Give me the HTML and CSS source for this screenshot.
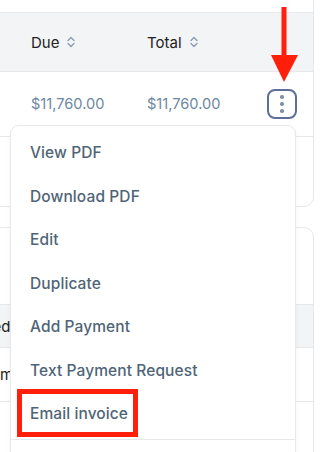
FILE: index.html
```html
<!DOCTYPE html>
<html lang="en">
<head>
    <meta charset="UTF-8">
    <meta name="viewport" content="width=device-width, initial-scale=1.0">
    <title>Invoices</title>
    <link rel="stylesheet" href="styles.css">
</head>
<body>
<div class="page">

    <div class="board">
        <!-- Invoice table -->
        <section class="card card-top">
            <div class="toolbar"></div>
            <div class="grid thead">
                <div class="cell"></div>
                <div class="cell">Due <svg class="sort" viewBox="0 0 8 12" width="8" height="12"><path d="M1 4.5 4 1.5 7 4.5M1 7.5 4 10.5 7 7.5" fill="none" stroke="#8b9cb0" stroke-width="1.4" stroke-linecap="round" stroke-linejoin="round"/></svg></div>
                <div class="cell">Total <svg class="sort" viewBox="0 0 8 12" width="8" height="12"><path d="M1 4.5 4 1.5 7 4.5M1 7.5 4 10.5 7 7.5" fill="none" stroke="#8b9cb0" stroke-width="1.4" stroke-linecap="round" stroke-linejoin="round"/></svg></div>
                <div class="cell"></div>
            </div>
            <div class="grid trow">
                <div class="cell"></div>
                <div class="cell amount">$11,760.00</div>
                <div class="cell amount">$11,760.00</div>
                <div class="cell action">
                    <button class="kebab" aria-label="More actions">
                        <span class="dot"></span><span class="dot"></span><span class="dot"></span>
                    </button>
                </div>
            </div>
            <div class="trow-empty"></div>
        </section>

        <!-- Second table -->
        <section class="card card-bottom">
            <div class="c2-top"></div>
            <div class="grid2 thead2">
                <div class="cell2">Created</div>
            </div>
            <div class="grid2 trow2">
                <div class="cell2 amount">Adam Lee</div>
            </div>
            <div class="trow-empty"></div>
        </section>
    </div>

    <!-- Actions menu -->
    <div class="menu">
        <a class="menu-item" href="#">View PDF</a>
        <a class="menu-item" href="#">Download PDF</a>
        <a class="menu-item" href="#">Edit</a>
        <a class="menu-item" href="#">Duplicate</a>
        <a class="menu-item" href="#">Add Payment</a>
        <a class="menu-item" href="#">Text Payment Request</a>
        <a class="menu-item" href="#">Email invoice</a>
        <div class="menu-divider"></div>
        <a class="menu-item" href="#">Delete</a>
    </div>

    <!-- Annotations -->
    <svg class="arrow" viewBox="0 0 30 76" width="30" height="76">
        <rect x="11.5" y="0" width="5" height="50" fill="#ff1f0a"/>
        <polygon points="1,48 28,48 14,75" fill="#ff1f0a"/>
    </svg>
    <div class="highlight"></div>

</div>
</body>
</html>
```

FILE: styles.css
```css
* {
    margin: 0;
    padding: 0;
    box-sizing: border-box;
}

body {
    font-family: Inter, "Noto Sans", sans-serif;
    background-color: #fff;
}

.page {
    position: relative;
    width: 326px;
    height: 452px;
    overflow: hidden;
}

.board {
    margin-left: -80px;
    width: 394px;
}

.card {
    border: 1px solid #e6e8eb;
    background-color: #fff;
}

.card-top {
    margin-top: -20px;
    border-radius: 0 0 10px 10px;
}

.card-bottom {
    margin-top: 20px;
    border-radius: 10px 10px 0 0;
}

.toolbar {
    height: 32px;
    border-bottom: 1px solid #e6e8eb;
}

.grid {
    display: grid;
    grid-template-columns: 94px 116px 116px 1fr;
}

.cell {
    display: flex;
    align-items: center;
    gap: 8px;
    padding-left: 16px;
    font-size: 15px;
    color: #222;
}

.thead {
    height: 59px;
    background-color: #f3f4f6;
    border-bottom: 1px solid #e6e8eb;
}

.trow {
    height: 65px;
    border-bottom: 1px solid #e6e8eb;
}

.trow-empty {
    height: 69px;
}

.amount {
    color: #6d88a1;
    font-size: 14.6px;
}

.action {
    justify-content: flex-end;
    padding-right: 16px;
}

.kebab {
    width: 30px;
    height: 30px;
    border: 2px solid #5a6f9b;
    border-radius: 8px;
    background-color: #fff;
    display: flex;
    flex-direction: column;
    align-items: center;
    justify-content: center;
    gap: 3.5px;
    cursor: pointer;
}

.dot {
    width: 3.5px;
    height: 3.5px;
    border-radius: 50%;
    background-color: #7f91a7;
}

.c2-top {
    height: 77px;
    border-bottom: 1px solid #e6e8eb;
}

.grid2 {
    display: flex;
}

.cell2 {
    display: flex;
    align-items: center;
    padding-left: 33px;
    font-size: 15px;
    color: #222;
}

.thead2 {
    height: 43px;
    background-color: #f3f4f6;
    border-bottom: 1px solid #e6e8eb;
}

.trow2 {
    height: 54px;
    border-bottom: 1px solid #e6e8eb;
}

.trow2 .cell2 {
    padding-left: 51px;
}

/* Dropdown menu */
.menu {
    position: absolute;
    left: 10px;
    top: 125px;
    width: 286px;
    padding-top: 5px;
    background-color: #fff;
    border: 1px solid #e6e8eb;
    border-radius: 9px;
    box-shadow: 0 2px 6px rgba(0, 0, 0, 0.04);
}

.menu-item {
    display: block;
    height: 43.5px;
    line-height: 43.5px;
    padding: 0 19px;
    font-size: 15.5px;
    font-weight: 500;
    letter-spacing: 0.1px;
    color: #4f6577;
    text-decoration: none;
}

.menu-divider {
    margin-top: 3px;
    border-top: 1px solid #e6e8eb;
}

/* Screenshot annotations */
.arrow {
    position: absolute;
    left: 270px;
    top: 7px;
}

.highlight {
    position: absolute;
    left: 17px;
    top: 389px;
    width: 121px;
    height: 48px;
    border: 5px solid #ff1f0a;
}
```
